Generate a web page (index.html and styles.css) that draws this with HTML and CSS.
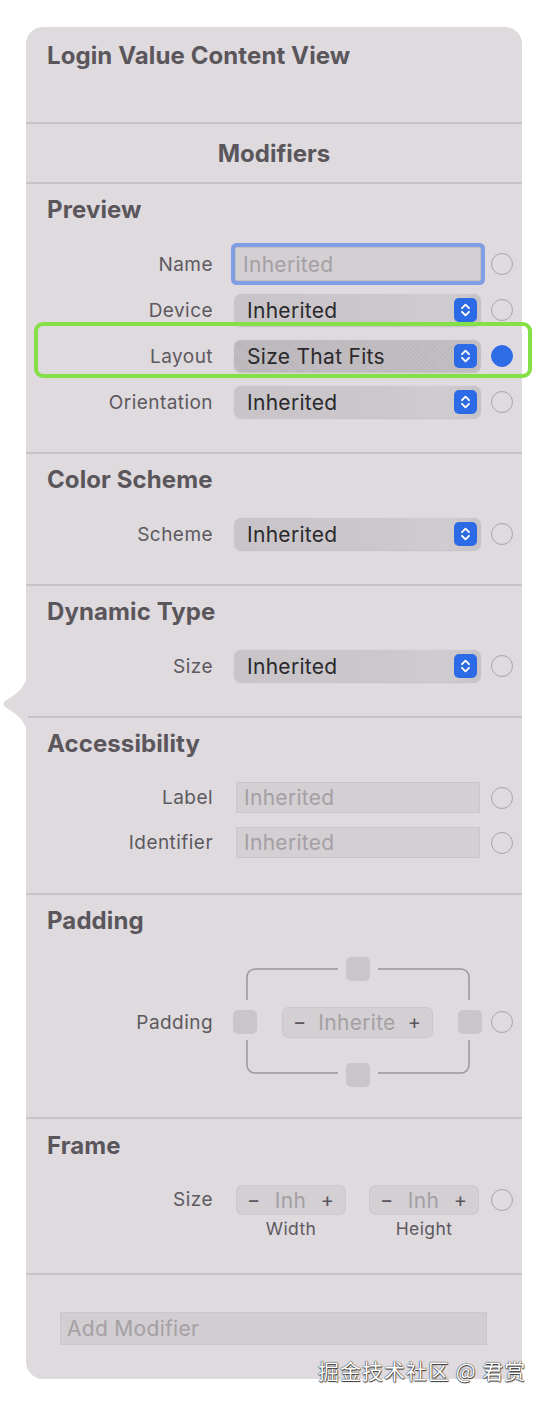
FILE: index.html
```html
<!DOCTYPE html>
<html>
<head>
<meta charset="utf-8">
<link rel="stylesheet" href="styles.css">
</head>
<body>
<div class="page">
  <svg class="arrow" width="28" height="70" viewBox="0 0 28 70">
    <path d="M28 0 C27 14 22 22 8 30 C2 33 2 37 8 40 C22 48 27 56 28 70 Z" fill="#dedade"/>
  </svg>
  <div class="panel">
    <div class="sec sec-title"><h1>Login Value Content View</h1></div>
    <div class="sec sec-mod"><div class="mod">Modifiers</div></div>

    <div class="sec">
      <h2>Preview</h2>
      <div class="rows">
        <div class="row">
          <div class="lbl">Name</div>
          <div class="field focus"><span class="ph">Inherited</span></div>
          <div class="radio"></div>
        </div>
        <div class="row">
          <div class="lbl">Device</div>
          <div class="popup"><span class="val">Inherited</span><svg class="stp" width="23" height="24" viewBox="0 0 23 24"><rect width="23" height="24" rx="5" fill="#2d6ae5"/><path d="M8 10.2 L11.5 6.7 L15 10.2 M8 13.8 L11.5 17.3 L15 13.8" stroke="#fff" stroke-width="1.9" fill="none" stroke-linecap="round" stroke-linejoin="round"/></svg></div>
          <div class="radio"></div>
        </div>
        <div class="row hl-row">
          <div class="highlight"></div>
          <div class="lbl">Layout</div>
          <div class="popup pressed"><span class="val">Size That Fits</span><svg class="stp" width="23" height="24" viewBox="0 0 23 24"><rect width="23" height="24" rx="5" fill="#2d6ae5"/><path d="M8 10.2 L11.5 6.7 L15 10.2 M8 13.8 L11.5 17.3 L15 13.8" stroke="#fff" stroke-width="1.9" fill="none" stroke-linecap="round" stroke-linejoin="round"/></svg></div>
          <div class="radio on"></div>
        </div>
        <div class="row">
          <div class="lbl">Orientation</div>
          <div class="popup"><span class="val">Inherited</span><svg class="stp" width="23" height="24" viewBox="0 0 23 24"><rect width="23" height="24" rx="5" fill="#2d6ae5"/><path d="M8 10.2 L11.5 6.7 L15 10.2 M8 13.8 L11.5 17.3 L15 13.8" stroke="#fff" stroke-width="1.9" fill="none" stroke-linecap="round" stroke-linejoin="round"/></svg></div>
          <div class="radio"></div>
        </div>
      </div>
    </div>

    <div class="sec">
      <h2>Color Scheme</h2>
      <div class="rows">
        <div class="row">
          <div class="lbl">Scheme</div>
          <div class="popup"><span class="val">Inherited</span><svg class="stp" width="23" height="24" viewBox="0 0 23 24"><rect width="23" height="24" rx="5" fill="#2d6ae5"/><path d="M8 10.2 L11.5 6.7 L15 10.2 M8 13.8 L11.5 17.3 L15 13.8" stroke="#fff" stroke-width="1.9" fill="none" stroke-linecap="round" stroke-linejoin="round"/></svg></div>
          <div class="radio"></div>
        </div>
      </div>
    </div>

    <div class="sec">
      <h2>Dynamic Type</h2>
      <div class="rows">
        <div class="row">
          <div class="lbl">Size</div>
          <div class="popup"><span class="val">Inherited</span><svg class="stp" width="23" height="24" viewBox="0 0 23 24"><rect width="23" height="24" rx="5" fill="#2d6ae5"/><path d="M8 10.2 L11.5 6.7 L15 10.2 M8 13.8 L11.5 17.3 L15 13.8" stroke="#fff" stroke-width="1.9" fill="none" stroke-linecap="round" stroke-linejoin="round"/></svg></div>
          <div class="radio"></div>
        </div>
      </div>
    </div>

    <div class="sec sec-acc">
      <h2>Accessibility</h2>
      <div class="rows">
        <div class="row row-acc">
          <div class="lbl">Label</div>
          <div class="field plain"><span class="ph">Inherited</span></div>
          <div class="radio"></div>
        </div>
        <div class="row row-acc">
          <div class="lbl">Identifier</div>
          <div class="field plain"><span class="ph">Inherited</span></div>
          <div class="radio"></div>
        </div>
      </div>
    </div>

    <div class="sec sec-pad">
      <h2>Padding</h2>
      <div class="row row-pad">
        <div class="lbl">Padding</div>
        <div class="diagram">
          <svg class="bracket" width="250" height="130" viewBox="0 0 250 130">
            <g stroke="#9b979b" stroke-width="1.5" fill="none">
              <path d="M105 12 H22 A8 8 0 0 0 14 20 V43"/>
              <path d="M145 12 H228 A8 8 0 0 1 236 20 V43"/>
              <path d="M14 83 V108 A8 8 0 0 0 22 116 H105"/>
              <path d="M236 83 V108 A8 8 0 0 1 228 116 H145"/>
            </g>
          </svg>
          <div class="sq-row"><div class="sq"></div></div>
          <div class="mid-row">
            <div class="sq"></div>
            <div class="stepper wide"><span class="pm">−</span><span class="sv">Inherite</span><span class="pm">+</span></div>
            <div class="sq"></div>
          </div>
          <div class="sq-row"><div class="sq"></div></div>
        </div>
        <div class="radio"></div>
      </div>
    </div>

    <div class="sec sec-frame">
      <h2>Frame</h2>
      <div class="row row-frame">
        <div class="lbl">Size</div>
        <div class="fgroup">
          <div class="stepper"><span class="pm">−</span><span class="sv">Inh</span><span class="pm">+</span></div>
          <div class="sub">Width</div>
        </div>
        <div class="fgroup">
          <div class="stepper"><span class="pm">−</span><span class="sv">Inh</span><span class="pm">+</span></div>
          <div class="sub">Height</div>
        </div>
        <div class="radio"></div>
      </div>
    </div>

    <div class="sec sec-add">
      <div class="add"><span class="ph">Add Modifier</span></div>
    </div>
  </div>
  <div class="watermark">掘金技术社区 @ 君赏</div>
</div>
</body>
</html>
```

FILE: styles.css
```css
* { box-sizing: border-box; }
html, body { margin: 0; padding: 0; background: #ffffff; }
body { font-family: Inter, "Noto Sans", sans-serif; }

.page {
  position: relative;
  width: 548px;
  height: 1404px;
  padding-top: 27px;
  padding-left: 26px;
}

.arrow {
  position: absolute;
  left: 0;
  top: 669px;
}

.panel {
  width: 496px;
  background: #dedade;
  border-radius: 17px;
}

.sec {
  border-top: 2px solid #c7c3c7;
  padding: 14px 0 27px 0;
}

h1, h2 {
  margin: 0;
  font-size: 24px;
  line-height: 24px;
  font-weight: 700;
  color: #5a565b;
  padding-left: 21px;
  letter-spacing: 0.1px;
}

.sec-title {
  border-top: none;
  padding: 17px 0 54px 0;
}

.sec-mod {
  padding: 18px 0 16px 0;
}
.mod {
  text-align: center;
  font-size: 24px;
  line-height: 24px;
  font-weight: 700;
  color: #5a565b;
}

.rows {
  margin-top: 19px;
}

.row {
  display: flex;
  align-items: center;
  height: 46px;
  position: relative;
}
.row-acc { height: 45px; }

.lbl {
  width: 187px;
  flex: none;
  text-align: right;
  font-size: 19px;
  color: #5d595e;
  letter-spacing: 0.45px;
}

.popup {
  margin-left: 21px;
  width: 247px;
  height: 32px;
  border-radius: 7px;
  background: linear-gradient(to right, #c8c4c8 0%, #cbc7cb 60%, #d0ccd0 85%, #c6c2c6 100%);
  display: flex;
  align-items: center;
  justify-content: space-between;
  padding: 0 4px 0 13px;
  box-shadow: 0 0.5px 1px rgba(0,0,0,0.12);
}
.popup.pressed {
  background:
    repeating-linear-gradient(45deg, rgba(0,0,0,0.035) 0 1px, rgba(0,0,0,0) 1px 3px),
    linear-gradient(to right, #bfbbbf 0%, #c3bfc3 100%);
}
.val {
  font-size: 21px;
  color: #2b292c;
  letter-spacing: 0.3px;
}
.stp { flex: none; }

.radio {
  flex: none;
  width: 22px;
  height: 22px;
  margin-left: 10px;
  border-radius: 50%;
  border: 1.5px solid #a9a5a9;
}
.radio.on {
  background: #2e6ce6;
  border-color: #2e6ce6;
}

.field {
  margin-left: 22px;
  width: 246px;
  height: 34px;
  background: #d3cfd3;
  display: flex;
  align-items: center;
  padding-left: 7px;
}
.field.focus {
  border: 1px solid #c4c0c4;
  border-radius: 2px;
  box-shadow: 0 0 0 4px #7f9ee3;
}
.field.plain {
  margin-left: 23px;
  width: 244px;
  height: 31px;
  border: 1px solid #c9c5c9;
  padding-left: 7px;
}
.row-acc .radio { margin-left: 11px; }

.ph {
  font-size: 21px;
  color: #a4a0a4;
  letter-spacing: 0.3px;
}

.highlight {
  position: absolute;
  left: 8px;
  top: -11px;
  width: 498px;
  height: 56px;
  border: 4px solid #84e046;
  border-radius: 9px;
  pointer-events: none;
}

/* padding */
.sec-acc { padding-bottom: 28px; }
.sec-pad { padding-bottom: 30px; }
.row-pad {
  height: auto;
  margin-top: 24px;
}
.diagram {
  position: relative;
  margin-left: 20px;
  width: 249px;
  height: 130px;
  display: flex;
  flex-direction: column;
  justify-content: space-between;
}
.bracket {
  position: absolute;
  left: 0;
  top: 0;
}
.sq-row {
  display: flex;
  justify-content: center;
  position: relative;
}
.mid-row {
  display: flex;
  justify-content: space-between;
  align-items: center;
  position: relative;
}
.sq {
  width: 24px;
  height: 24px;
  border-radius: 5px;
  background: #c9c5c9;
}
.row-pad .radio { margin-left: 9px; }

.stepper {
  height: 30px;
  width: 110px;
  border-radius: 7px;
  background: #d3cfd3;
  box-shadow: inset 0 0 0 1px #cbc7cb;
  display: flex;
  align-items: center;
  justify-content: space-between;
  padding: 0 12px 0 11px;
}
.stepper.wide {
  width: 151px;
  height: 31px;
  padding: 0 12px 0 11px;
}
.pm {
  font-size: 20px;
  color: #5a565b;
  line-height: 1;
}
.sv {
  font-size: 21px;
  color: #a4a0a4;
  letter-spacing: 0.3px;
}

/* frame */
.sec-frame { padding-top: 15px; padding-bottom: 33px; }
.row-frame {
  height: auto;
  align-items: flex-start;
  margin-top: 27px;
}
.row-frame .lbl {
  line-height: 30px;
}
.fgroup {
  margin-left: 23px;
  display: flex;
  flex-direction: column;
  align-items: center;
}
.sub {
  margin-top: 3px;
  font-size: 17.5px;
  line-height: 22px;
  color: #5d595e;
  letter-spacing: 0.4px;
}
.row-frame .radio {
  margin-left: 12px;
  margin-top: 4px;
}

/* add */
.sec-add {
  padding: 37px 0 34px 0;
}
.add {
  margin-left: 34px;
  width: 427px;
  height: 33px;
  background: #d1cdd1;
  border: 1px solid #cbc7cb;
  display: flex;
  align-items: center;
  padding-left: 6px;
}

.watermark {
  position: absolute;
  left: 318px;
  top: 1355px;
  font-family: "Noto Sans CJK SC", sans-serif;
  font-size: 21px;
  line-height: 30px;
  color: #ffffff;
  letter-spacing: 1px;
  text-shadow: 0 0 1px #333, 0 0 1px #333, 0.5px 0.5px 1px #333;
}
```
